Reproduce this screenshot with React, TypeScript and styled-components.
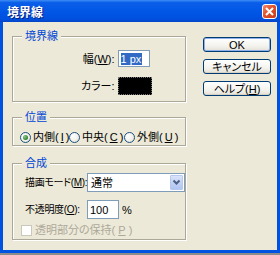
import styled, { createGlobalStyle } from 'styled-components';

const GlobalStyle = createGlobalStyle`
  html, body {
    margin: 0;
    padding: 0;
    background: #8c8c8c;
  }
  body {
    font-family: "Liberation Sans", "Noto Sans CJK JP", sans-serif;
    font-size: 11px;
    font-feature-settings: "palt";
    color: #000;
  }
`;

const Window = styled.div`
  width: 280px;
  height: 253px;
  display: flex;
  flex-direction: column;
`;

const TitleBar = styled.div`
  height: 22px;
  flex: none;
  display: flex;
  align-items: center;
  justify-content: space-between;
  padding: 0 3px 0 7px;
  background: linear-gradient(to bottom, #3d8cf5 0%, #0a5ee8 12%, #0055e5 60%, #004fdc 90%, #0644c4 100%);
`;

const Title = styled.span`
  color: #fff;
  font-family: "Noto Sans CJK JP", sans-serif;
  font-weight: 700;
  font-size: 12px;
  line-height: 13px;
  text-shadow: 1px 1px 0 #0a1e80;
`;

const CloseBox = styled.div`
  width: 15px;
  height: 15px;
  box-sizing: border-box;
  border: 1px solid #fff;
  border-radius: 3px;
  background: linear-gradient(135deg, #f08a6a 0%, #e2522c 45%, #c93d16 100%);
  display: flex;
  align-items: center;
  justify-content: center;
  margin-top: 1px;
`;

const Frame = styled.div`
  flex: 1;
  display: flex;
  background: #ece9d8;
  border: 3px solid #0053e1;
  border-top: none;
`;

const Body = styled.div`
  flex: 1;
  display: flex;
  align-items: flex-start;
  gap: 17px;
  padding: 8px 0 0 9px;
`;

const LeftCol = styled.div`
  width: 174px;
  display: flex;
  flex-direction: column;
`;

const Group = styled.fieldset<{ $mt?: number }>`
  margin: ${(p) => p.$mt ?? 0}px 0 0;
  padding: 0;
  min-width: 0;
  border: 1px solid #aca899;
  box-shadow: inset 1px 1px 0 #fff, 1px 1px 0 #fff;
`;

const Legend = styled.legend`
  margin-left: 9px;
  padding: 0 3px;
  color: #0046d5;
  font-size: 11px;
  line-height: 12px;
  height: 12px;
  background: #ece9d8;
`;

const FieldGrid = styled.div<{ $col: number; $pl: number; $gap: number; $pt: number; $pb: number; $rg: number }>`
  display: grid;
  grid-template-columns: minmax(${(p) => p.$col}px, auto) auto;
  column-gap: ${(p) => p.$gap}px;
  row-gap: ${(p) => p.$rg}px;
  align-items: center;
  justify-items: start;
  padding: ${(p) => p.$pt}px 0 ${(p) => p.$pb}px ${(p) => p.$pl}px;
`;

const Label = styled.span<{ $right?: boolean; $small?: boolean }>`
  line-height: 12px;
  white-space: nowrap;
  font-size: ${(p) => (p.$small ? '10px' : '11px')};
  letter-spacing: ${(p) => (p.$small ? '-0.3px' : '0')};
  justify-self: ${(p) => (p.$right ? 'end' : 'start')};
`;

const TextBox = styled.div<{ $h: number }>`
  width: 32px;
  height: ${(p) => p.$h}px;
  box-sizing: border-box;
  border: 1px solid #7f9db9;
  background: #fff;
  display: flex;
  align-items: center;
  padding-left: 2px;
  line-height: 12px;
  white-space: nowrap;
`;

const Selected = styled.span`
  background: #316ac5;
  color: #fff;
  padding-right: 1px;
`;

const Swatch = styled.div`
  width: 34px;
  height: 18px;
  box-sizing: border-box;
  background: #000;
  border: 1px dotted #777;
`;

const RadioRow = styled.div`
  display: grid;
  grid-template-columns: 49px 55px auto;
  padding: 8px 0 2px 7px;
`;

const RadioItem = styled.label`
  display: flex;
  align-items: center;
  gap: 2px;
  line-height: 12px;
  white-space: nowrap;
`;

const RadioCircle = styled.span<{ $on?: boolean }>`
  flex: none;
  width: 11px;
  height: 11px;
  box-sizing: border-box;
  border-radius: 50%;
  border: 1px solid #1c5180;
  background: radial-gradient(circle at 35% 35%, #fff 0%, #f3f2ec 50%, #dcd9cc 100%);
  display: flex;
  align-items: center;
  justify-content: center;
  &::after {
    content: '';
    display: ${(p) => (p.$on ? 'block' : 'none')};
    width: 5px;
    height: 5px;
    border-radius: 50%;
    background: radial-gradient(circle at 35% 35%, #8fc88f 0%, #3b8a3b 60%, #2a5f2a 100%);
  }
`;

const SelectBox = styled.div`
  width: 98px;
  height: 19px;
  box-sizing: border-box;
  border: 1px solid #7f9db9;
  background: #fff;
  display: flex;
  align-items: stretch;
`;

const SelectValue = styled.span`
  flex: 1;
  display: flex;
  align-items: center;
  padding-left: 3px;
  line-height: 12px;
`;

const SelectButton = styled.span`
  width: 13px;
  margin: 1px;
  box-sizing: border-box;
  border: 1px solid #b7c9ef;
  border-radius: 1px;
  background: linear-gradient(to bottom, #dbe4f9 0%, #c3d3f6 50%, #b1c5f2 100%);
  display: flex;
  align-items: center;
  justify-content: center;
`;

const Inline = styled.div`
  display: flex;
  align-items: center;
  gap: 3px;
`;

const CheckRow = styled.label`
  display: flex;
  align-items: center;
  gap: 3px;
  padding: 3px 0 3px 8px;
  color: #aca899;
  line-height: 12px;
  white-space: nowrap;
`;

const CheckBox = styled.span`
  width: 11px;
  height: 11px;
  box-sizing: border-box;
  border: 1px solid #cac8bb;
  background: #fff;
`;

const RightCol = styled.div`
  display: flex;
  flex-direction: column;
  gap: 7px;
  padding-top: 7px;
`;

const Button = styled.button<{ $default?: boolean }>`
  width: 68px;
  height: 15px;
  padding: 0;
  box-sizing: border-box;
  font-family: inherit;
  font-size: 11px;
  font-feature-settings: "palt";
  line-height: 12px;
  color: #000;
  border: 1px solid #003c74;
  border-radius: 3px;
  background: linear-gradient(to bottom, #ffffff 0%, #f4f3ee 60%, #e3e0d6 100%);
  box-shadow: ${(p) => (p.$default ? 'inset 0 0 0 1px #8fb0eb' : 'inset 0 -1px 0 #d6d0c5')};
  display: flex;
  align-items: center;
  justify-content: center;
`;

export default function App() {
  return (
    <>
      <GlobalStyle />
      <Window>
        <TitleBar>
          <Title>境界線</Title>
          <CloseBox>
            <svg width="9" height="9" viewBox="0 0 9 9">
              <path d="M1 1 L8 8 M8 1 L1 8" stroke="#fff" strokeWidth="2" />
            </svg>
          </CloseBox>
        </TitleBar>
        <Frame>
          <Body>
            <LeftCol>
              <Group>
                <Legend>境界線</Legend>
                <FieldGrid $col={68} $pl={0} $gap={3} $pt={8} $pb={6} $rg={10}>
                  <Label $right>
                    幅(<u>W</u>):
                  </Label>
                  <TextBox $h={17}>
                    <Selected>1 px</Selected>
                  </TextBox>
                  <Label $right>カラー:</Label>
                  <Swatch />
                </FieldGrid>
              </Group>
              <Group $mt={9}>
                <Legend>位置</Legend>
                <RadioRow>
                  <RadioItem>
                    <RadioCircle $on />
                    内側(<u>I</u>)
                  </RadioItem>
                  <RadioItem>
                    <RadioCircle />
                    中央(<u>C</u>)
                  </RadioItem>
                  <RadioItem>
                    <RadioCircle />
                    外側(<u>U</u>)
                  </RadioItem>
                </RadioRow>
              </Group>
              <Group $mt={11}>
                <Legend>合成</Legend>
                <FieldGrid $col={57} $pl={12} $gap={2} $pt={4} $pb={2} $rg={8}>
                  <Label $small>
                    描画モード(<u>M</u>):
                  </Label>
                  <SelectBox>
                    <SelectValue>通常</SelectValue>
                    <SelectButton>
                      <svg width="9" height="7" viewBox="0 0 9 7">
                        <path d="M1.5 1.5 L4.5 4.5 L7.5 1.5" stroke="#4d6185" strokeWidth="2" fill="none" />
                      </svg>
                    </SelectButton>
                  </SelectBox>
                  <Label $small>
                    不透明度(<u>O</u>):
                  </Label>
                  <Inline>
                    <TextBox $h={19}>100</TextBox>
                    <span>%</span>
                  </Inline>
                </FieldGrid>
                <CheckRow>
                  <CheckBox />
                  透明部分の保持(<u>P</u>)
                </CheckRow>
              </Group>
            </LeftCol>
            <RightCol>
              <Button $default>OK</Button>
              <Button>キャンセル</Button>
              <Button>
                ヘルプ(<u>H</u>)
              </Button>
            </RightCol>
          </Body>
        </Frame>
      </Window>
    </>
  );
}
